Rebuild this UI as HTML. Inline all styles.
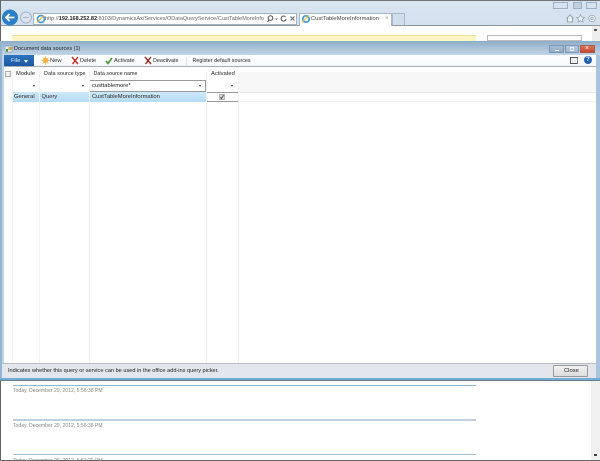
<!DOCTYPE html>
<html><head><meta charset="utf-8"><style>
html,body{margin:0;padding:0;width:600px;height:461px;overflow:hidden;background:#fff}
body{position:relative;font-family:"Liberation Sans",sans-serif;font-size:5.6px;color:#2a2a2a;filter:blur(.35px)}
div,svg,span.a{position:absolute;box-sizing:border-box}
.t{white-space:nowrap;line-height:8px}
</style></head><body>
<!-- browser chrome -->
<div style="left:0;top:0;width:600px;height:26px;background:linear-gradient(#d9e4f0,#d3e0ef);border-top:1px solid #6d7378"></div>
<div style="left:0;top:25px;width:600px;height:1px;background:#8e969e"></div>
<div style="left:0;top:26px;width:600px;height:15px;background:#fff"></div>
<div style="left:0;top:0;width:1px;height:461px;background:#666"></div>
<!-- caption buttons -->
<div style="left:553px;top:2px;width:15px;height:7px;border:1px solid #9db0c4;background:#d7e2ef"></div>
<div style="left:573px;top:2px;width:9px;height:7px;border:1px solid #9db0c4;background:#c2cfdd"></div>
<div style="left:586px;top:2px;width:11px;height:7px;border:1px solid #9db0c4;background:#d7e2ef"></div>
<!-- back / forward -->
<svg style="left:1px;top:8px" width="32" height="19" viewBox="0 0 32 19">
<circle cx="9" cy="9.500" r="8" fill="#2a7fc6"/>
<path d="M13.500 9.500H5.500M8.500 6L5 9.500 8.500 13" stroke="#fff" stroke-width="1.800" fill="none"/>
<circle cx="25" cy="9.500" r="5.500" fill="#d9e3ee" stroke="#a7b7c8"/>
<path d="M22 9.500h6" stroke="#a9b6c4"/>
</svg>
<!-- address bar -->
<div style="left:33px;top:13px;width:264px;height:12px;background:#fff;border:1px solid #a4b2c1"></div>
<svg style="left:36px;top:14px" width="10" height="10" viewBox="0 0 10 10"><circle cx="5" cy="5" r="3.500" fill="#fff" stroke="#3f9ad6" stroke-width="1.700"/><path d="M1 8.500L8 1.500" stroke="#e8b73a" stroke-width="1.200"/></svg>
<div class="t" style="left:45px;top:14.500px;font-size:5.500px;color:#666">http://<b style="color:#222">192.168.252.82</b>:8103/DynamicsAx/Services/ODataQueryService/CustTableMoreInfo</div>
<svg style="left:266px;top:14px" width="30" height="10" viewBox="0 0 30 10"><circle cx="4.500" cy="4" r="2.300" fill="none" stroke="#555"/><path d="M3 6L1.500 8" stroke="#555"/><path d="M9 4.500h3L10.500 6z" fill="#666"/><path d="M19.500 3a2.500 2.500 0 1 0 .5 2" fill="none" stroke="#555"/><path d="M24.500 2.500l4 4M28.500 2.500l-4 4" stroke="#666"/></svg>
<!-- tabs -->
<div style="left:299px;top:13px;width:93px;height:13px;background:#fff;border:1px solid #a9b8c8;border-bottom:0"></div>
<div style="left:392px;top:13px;width:13px;height:12px;background:#cfddec;border:1px solid #a9b8c8;border-bottom:0"></div>
<svg style="left:301px;top:14px" width="10" height="10" viewBox="0 0 10 10"><circle cx="5" cy="5" r="3.200" fill="#fff" stroke="#3f9ad6" stroke-width="1.700"/><path d="M1 8.500L8 1.500" stroke="#e8b73a" stroke-width="1.200"/></svg>
<div class="t" style="left:311px;top:15px;font-size:5.800px;color:#444">CustTableMoreInformation</div>
<div class="t" style="left:385px;top:15px;font-size:6px;color:#999">×</div>
<!-- home, star, gear -->
<svg style="left:565px;top:13px" width="33" height="11" viewBox="0 0 33 11"><path d="M1.500 5.500L5 2l3.500 3.500M2.500 5v4h5V5" fill="#eef3f8" stroke="#95a3b2"/><path d="M15.500 1.500l1.200 2.600 2.800.3-2.100 1.900.6 2.800-2.500-1.400-2.500 1.400.6-2.800-2.100-1.900 2.800-.3z" fill="#eef3f8" stroke="#95a3b2" stroke-width=".8"/><circle cx="27" cy="5.500" r="3.300" fill="#eef3f8" stroke="#a7b3c0"/><circle cx="27" cy="5.500" r="1.200" fill="none" stroke="#a7b3c0"/></svg>
<!-- page behind -->
<div style="left:12px;top:35px;width:464px;height:6px;background:#fdf6c4;border-top:1px solid #e8dfa3"></div>
<div style="left:487px;top:35px;width:95px;height:6px;background:#fff;border:1px solid #bbb"></div>
<div style="left:592px;top:26px;width:8px;height:15px;background:#eee"></div>
<div style="left:594px;top:29px;width:3px;height:2px;background:#555"></div>
<!-- dialog title -->
<div style="left:0;top:41px;width:600px;height:14px;background:linear-gradient(#8eadc9,#c3d5e7)"></div>
<svg style="left:5px;top:45px" width="8" height="8" viewBox="0 0 8 8"><rect x="0" y="1" width="7" height="6" fill="#e6eef5" stroke="#7c8ea0" stroke-width=".6"/><rect x="1" y="4" width="2" height="2.500" fill="#3f8f3a"/><rect x="3.500" y="2" width="3" height="3" fill="#d8a62e"/></svg>
<div class="t" style="left:14px;top:45px;font-size:5.500px;color:#222">Document data sources (1)</div>
<div style="left:549px;top:45px;width:15px;height:8px;background:linear-gradient(#a9c0d8,#8facc8);border:1px solid #7d97b2"></div>
<div style="left:555px;top:50px;width:4px;height:1px;background:#fff"></div>
<div style="left:565px;top:45px;width:14px;height:8px;background:linear-gradient(#b7cbdf,#a0b9d1);border:1px solid #7d97b2"></div>
<div style="left:570px;top:47px;width:4px;height:4px;border:1px solid #eef"></div>
<div style="left:580px;top:45px;width:15px;height:8px;background:linear-gradient(#d9755a,#c9492c);border:1px solid #a8584a"></div>
<div class="t" style="left:585px;top:45px;font-size:7px;color:#fff">×</div>
<!-- toolbar -->
<div style="left:2px;top:55px;width:594px;height:11px;background:linear-gradient(#fff,#f4f7fa)"></div>
<div style="left:0;top:66px;width:600px;height:1px;background:#a9adb3"></div>
<div style="left:4px;top:55px;width:30px;height:11px;background:linear-gradient(#2c74bf,#1c57a2)"></div>
<div class="t" style="left:11px;top:56.500px;font-size:5.800px;color:#dce8f5">File</div>
<div style="left:24px;top:60px;width:0;height:0;border:2px solid transparent;border-top:3px solid #fff"></div>
<svg style="left:41px;top:56px" width="9" height="9" viewBox="0 0 9 9"><circle cx="4.500" cy="4.500" r="2.500" fill="#f0a51e"/><path d="M4.500 .3v8.400M.3 4.500h8.400M1.500 1.500l6 6M7.500 1.500l-6 6" stroke="#f3b84b" stroke-width=".8"/></svg>
<div class="t" style="left:50px;top:56.500px;font-size:5.800px">New</div>
<svg style="left:71px;top:56px" width="8" height="9" viewBox="0 0 8 9"><path d="M1 1l6 7M7 1L1.500 8" stroke="#c2281c" stroke-width="1.400"/></svg>
<div class="t" style="left:80px;top:56.500px;font-size:5.600px">Delete</div>
<svg style="left:105px;top:56px" width="8" height="9" viewBox="0 0 8 9"><path d="M1 5l2 2.500L7 2" stroke="#3f962b" stroke-width="1.500" fill="none"/></svg>
<div class="t" style="left:114px;top:56.500px;font-size:5.800px">Activate</div>
<svg style="left:144px;top:56px" width="8" height="9" viewBox="0 0 8 9"><path d="M1 1l6 7M7 1L1.500 8" stroke="#a8281f" stroke-width="1.400"/></svg>
<div class="t" style="left:153px;top:56.500px;font-size:5.400px">Deactivate</div>
<div style="left:186px;top:57px;width:1px;height:8px;background:#dde2e7"></div>
<div class="t" style="left:192.500px;top:56.500px;font-size:5.400px">Register default sources</div>
<div style="left:570px;top:57px;width:8px;height:7px;background:#eef0f2;border:1px solid #555;border-right-color:#888"></div>
<div style="left:584px;top:56px;width:8px;height:8px;border-radius:50%;background:#1f5fae;color:#fff;font-size:6px;font-weight:bold;line-height:8px;text-align:center">?</div>
<!-- grid -->
<div style="left:2px;top:67px;width:594px;height:297px;background:#fff"></div>
<div style="left:239px;top:72px;width:357px;height:20px;background:#f7f7f7"></div>
<div style="left:12px;top:92px;width:584px;height:1px;background:#e6e6e6"></div>
<div style="left:239px;top:101px;width:357px;height:1px;background:#f3f3f3"></div>
<div style="left:5px;top:71px;width:6px;height:6px;border:1px solid #aaa;background:#f2f2f2"></div>
<div class="t" style="left:16px;top:70px;font-size:5.800px">Module</div>
<div class="t" style="left:44px;top:70px;font-size:5.500px">Data source type</div>
<div class="t" style="left:93.500px;top:70px;font-size:5.400px">Data source name</div>
<div class="t" style="left:211px;top:70px;font-size:5.800px">Activated</div>
<div style="left:12px;top:80px;width:227px;height:12px;background:#fff"></div>
<div style="left:89px;top:80px;width:117px;height:12px;background:#fff;border:1px solid #999"></div>
<div class="t" style="left:92px;top:82px;font-size:5.800px;color:#222">custtablemore*</div>
<div style="left:33px;top:85px;width:0;height:0;border:1.500px solid transparent;border-top:2.500px solid #333"></div>
<div style="left:82px;top:85px;width:0;height:0;border:1.500px solid transparent;border-top:2.500px solid #333"></div>
<div style="left:199px;top:85px;width:0;height:0;border:1.500px solid transparent;border-top:2.500px solid #333"></div>
<div style="left:231px;top:85px;width:0;height:0;border:1.500px solid transparent;border-top:2.500px solid #333"></div>
<div style="left:12px;top:92px;width:194px;height:10px;background:linear-gradient(#cfe8f8,#b3dcf5)"></div>
<div style="left:206px;top:92px;width:33px;height:10px;background:#fff;border:1px solid #9a9a9a"></div>
<div style="left:219px;top:94px;width:6px;height:6px;background:#d3d3d8;border:1px solid #b5b5ba"></div>
<svg style="left:219px;top:94px" width="6" height="6" viewBox="0 0 6 6"><path d="M1.500 3l1 1.700L4.500 1" stroke="#555" fill="none" stroke-width=".9"/></svg>
<div class="t" style="left:14px;top:93px;font-size:5.800px">General</div>
<div class="t" style="left:41.500px;top:93px;font-size:5.800px">Query</div>
<div class="t" style="left:92px;top:93px;font-size:5.800px">CustTableMoreInformation</div>
<div style="left:12px;top:72px;width:1px;height:292px;background:#f3f5f7"></div>
<div style="left:39px;top:72px;width:1px;height:292px;background:#eff2f5"></div>
<div style="left:89px;top:72px;width:1px;height:292px;background:#eff2f5"></div>
<div style="left:206px;top:72px;width:1px;height:292px;background:#eff2f5"></div>
<div style="left:238px;top:72px;width:1px;height:292px;background:#eff2f5"></div>
<div style="left:2px;top:55px;width:2px;height:310px;background:#c0d4e8"></div>
<div style="left:0;top:41px;width:2px;height:340px;background:#94b4cf"></div>
<div style="left:596px;top:55px;width:4px;height:326px;background:#a9c4dc"></div>
<!-- status bar -->
<div style="left:2px;top:363px;width:594px;height:15px;background:#e3e6ec;border-top:1px solid #b8bcc2"></div>
<div class="t" style="left:8px;top:367px;font-size:5.600px;color:#222">Indicates whether this query or service can be used in the office add-ins query picker.</div>
<div style="left:553px;top:365px;width:35px;height:12px;background:linear-gradient(#f3f3f3,#dcdcdc);border:1px solid #9b9b9b;border-radius:1px"></div>
<div class="t" style="left:564px;top:367px;font-size:5.800px;color:#222">Close</div>
<div style="left:0;top:378px;width:600px;height:2px;background:#70afd0"></div>
<div style="left:0;top:380px;width:600px;height:1px;background:#6a7f8d"></div>
<!-- page below -->
<div style="left:591px;top:381px;width:9px;height:79px;background:#f0f0f0"></div>
<div style="left:594px;top:454px;width:3px;height:2px;background:#444"></div>
<div style="left:13px;top:385px;width:463px;height:1px;background:#90b4c9"></div>
<div class="t" style="left:13px;top:387px;font-size:5.100px;color:#888">Today, December 29, 2012, 5:56:38 PM</div>
<div style="left:13px;top:419px;width:463px;height:2px;background:#c0cfdd"></div>
<div class="t" style="left:13px;top:422px;font-size:5.100px;color:#888">Today, December 29, 2012, 5:56:38 PM</div>
<div style="left:13px;top:454px;width:463px;height:1px;background:#a5bccd"></div>
<div class="t" style="left:13px;top:457px;font-size:5.100px;color:#888">Today, December 29, 2012, 5:57:20 PM</div>
<div style="left:0;top:460px;width:600px;height:1px;background:#666"></div>
</body></html>
